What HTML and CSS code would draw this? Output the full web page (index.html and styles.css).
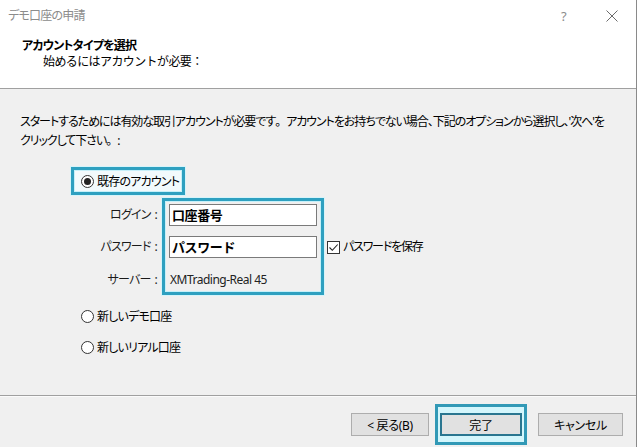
FILE: index.html
```html
<!DOCTYPE html>
<html lang="ja">
<head>
  <meta charset="UTF-8" />
  <title>デモ口座の申請</title>
  <link rel="stylesheet" href="styles.css">
</head>
<body>
  <div class="window">
    <div class="titlebar">
      <span class="title">デモ口座の申請</span>
      <span class="help">?</span>
      <span class="close">
        <svg width="12" height="12" viewBox="0 0 12 12"><path d="M0.5 0.5 L11.5 11.5 M11.5 0.5 L0.5 11.5" stroke="#6b6b6b" stroke-width="1" fill="none"/></svg>
      </span>
    </div>

    <div class="header">
      <div class="header-title">アカウントタイプを選択</div>
      <div class="header-sub">始めるにはアカウントが必要：</div>
    </div>

    <div class="content">
      <p class="intro">スタートするためには有効な取引アカウントが必要です<span class="wide">。</span>アカウントをお持ちでない場合、下記のオプションから選択し、'次へ'を<br>クリックして下さい<span class="wide">。</span>:</p>

      <div class="first-option">
        <label class="mark radio-row"><span class="radio checked"></span>既存のアカウント</label>
      </div>

      <div class="login-form">
        <div class="labels">
          <div class="row">ログイン<span class="colon">:</span></div>
          <div class="row">パスワード<span class="colon">:</span></div>
          <div class="row row-last">サーバー<span class="colon">:</span></div>
        </div>
        <div class="fields mark">
          <div class="input">口座番号</div>
          <div class="input">パスワード</div>
          <div class="server">XMTrading-Real 45</div>
        </div>
        <div class="extras">
          <div class="row"></div>
          <label class="row check-row"><span class="checkbox"><svg width="11" height="11" viewBox="0 0 11 11"><path d="M1.5 5.5 L4.3 8.3 L9.7 2.5" stroke="#222" stroke-width="1.1" fill="none"/></svg></span>パスワードを保存</label>
        </div>
      </div>

      <label class="radio-row option"><span class="radio"></span>新しいデモ口座</label>
      <label class="radio-row option"><span class="radio"></span>新しいリアル口座</label>
    </div>

    <div class="footer">
      <button class="btn btn-back">&lt; 戻る(B)</button>
      <span class="mark-btn"><button class="btn btn-default">完了</button></span>
      <button class="btn btn-cancel">キャンセル</button>
    </div>
  </div>
</body>
</html>
```

FILE: styles.css
```css
* { margin:0; padding:0; box-sizing:border-box; }
body {
  background:#fff;
  font-family:"Noto Sans", "Noto Sans CJK JP", sans-serif;
  font-size:12px; color:#1a1a1a;
  font-feature-settings:"palt";
  letter-spacing:-0.8px;
  width:638px; height:447px; overflow:hidden;
}
.window {
  width:637px; height:447px;
  border-right:1px solid #8a8a8a;
  display:flex; flex-direction:column;
}

/* title bar */
.titlebar {
  height:32px; background:#fff;
  display:flex; align-items:center;
  padding-left:8px;
}
.title { color:#8c8c8c; flex:1; margin-top:-2px; }
.help { color:#8c8c8c; font-size:13px; width:22px; margin-right:23px; }
.close { width:30px; display:flex; }

/* header */
.header {
  height:57px; background:#fff;
  border-bottom:1px solid #a0a0a0;
  padding:6px 0 0 22px;
  line-height:16px;
}
.header-title { font-weight:bold; color:#000; }
.header-sub { padding-left:21px; color:#000; font-feature-settings:normal; letter-spacing:-0.6px; }

/* body */
.content {
  flex:1; background:#f0f0f0;
  padding:23px 0 0 20px;
}
.intro { line-height:19px; color:#000; white-space:nowrap; letter-spacing:-1.05px; }
.wide { font-feature-settings:normal; }

.mark {
  border:3px solid #2ea0c0;
  box-shadow:inset 0 0 0 1px #c6f0f9, 0 0 0 1px #d6f4fa;
}

.first-option { margin:17px 0 0 51px; display:flex; }
.radio-row {
  display:flex; align-items:center;
  height:20px; color:#000;
}
.first-option .radio-row {
  height:28px; padding:0 3px 0 7px;
  background:#f2fafc;
}
.radio {
  width:13px; height:13px; border:1px solid #333;
  border-radius:50%; background:#fff;
  margin-right:3px;
  display:flex; align-items:center; justify-content:center;
}
.radio.checked::after {
  content:""; width:7px; height:7px;
  border-radius:50%; background:#222;
}

.login-form { display:flex; margin:3px 0 0 70px; }
.labels {
  width:70px; margin-right:2px;
  padding-top:6px; text-align:right;
  display:flex; flex-direction:column; gap:10px;
}
.colon { padding:0 3px 0 4px; }
.row { height:22px; line-height:22px; white-space:nowrap; }
.row-last { height:24px; line-height:24px; }
.fields {
  width:162px; padding:3px 4px 0 4px;
  display:flex; flex-direction:column; gap:10px;
}
.input {
  height:22px; background:#fff;
  border:1px solid #7a7a7a;
  font-size:13px; font-weight:bold; color:#000;
  font-feature-settings:normal; letter-spacing:-0.4px;
  line-height:20px; padding-left:2px;
}
.server { height:24px; line-height:24px; padding-left:1px; color:#222; letter-spacing:-0.5px; }
.extras {
  margin-left:3px; padding-top:6px;
  display:flex; flex-direction:column; gap:10px;
}
.check-row { display:flex; align-items:center; color:#000; letter-spacing:-1.2px; }
.checkbox {
  width:13px; height:13px; border:1px solid #333;
  background:#fff; margin-right:3px;
  display:flex; align-items:center; justify-content:center;
}

.option { margin:11px 0 0 61px; }

/* footer */
.footer {
  height:52px; background:#f0f0f0;
  border-top:1px solid #a0a0a0;
  box-shadow:inset 0 1px 0 #fbfbfb;
  display:flex; justify-content:flex-end; align-items:flex-start;
  padding:8px 13px 0 0;
}
.btn {
  height:23px; background:#e1e1e1;
  border:1px solid #adadad;
  font-family:inherit; font-size:12px; color:#000;
  font-feature-settings:"palt"; letter-spacing:-0.3px;
}
.btn-back { width:78px; margin:9px 6px 0 0; }
.mark-btn {
  display:flex; padding:6px 2px;
  border:3px solid #3299b6;
  background:#d4f6fc;
}
.btn-default { width:82px; border:2px solid #2a7690; }
.btn-cancel { width:85px; margin:9px 0 0 11px; }
```
